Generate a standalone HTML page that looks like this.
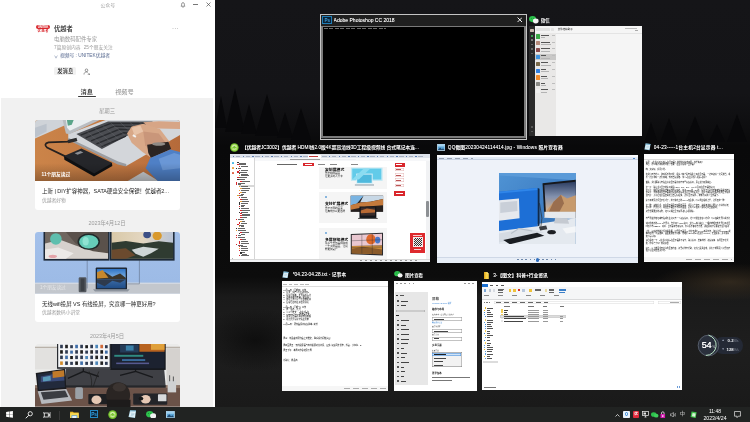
<!DOCTYPE html>
<html lang="zh-CN">
<head>
<meta charset="utf-8">
<title>任务视图</title>
<style>
*{box-sizing:border-box;margin:0;padding:0}
html,body{width:750px;height:422px;overflow:hidden;background:#0b0b0b}
body{position:relative;font-family:"Liberation Sans","Noto Sans CJK SC",sans-serif;color:#fff;-webkit-font-smoothing:antialiased}
.abs{position:absolute}
#tv,#panel,#taskbar{will-change:transform}
#wall{position:absolute;left:215px;top:0;width:535px;height:407px;overflow:hidden;
 background:
  radial-gradient(ellipse 70px 40px at 40px 340px,rgba(8,8,8,.7),rgba(8,8,8,0) 80%),
  radial-gradient(ellipse 90px 22px at 515px 282px,rgba(70,56,38,.6),rgba(0,0,0,0) 85%),
  linear-gradient(180deg,#151518 0%,#141417 23%,#0e0e10 31%,#09090a 36%,#0b0b0b 60%,#0c0c0c 68%,#1a1a1a 73%,#1e1e1e 85%,#1a1a1a 100%)}
/* ---------- left panel ---------- */
#panel{position:absolute;left:0;top:0;width:215px;height:406.5px;background:#fff;overflow:hidden;color:#222}
#panel .feed{position:absolute;left:1px;top:97.5px;width:211.6px;height:310px;background:#f1f1f1}
.t{position:absolute;white-space:nowrap;line-height:1}
.card{position:absolute;left:35px;width:145px;background:#fff;border-radius:3px;overflow:hidden}
.card svg{display:block}
.date{position:absolute;left:1px;width:212px;text-align:center;font-size:5.4px;color:#9a9a9a;line-height:1}
/* ---------- task view ---------- */
.wt{position:absolute;white-space:nowrap;font-size:4.75px;line-height:1.15;color:#fff;overflow:hidden;font-weight:500;text-shadow:0 0 .4px rgba(255,255,255,.6)}
.thumb{position:absolute;overflow:hidden;background:#fff}
.bx{position:absolute;background:var(--f,#fff);box-shadow:inset 0 0 0 .4px var(--b,#888)}
/* ---------- taskbar ---------- */
#taskbar{position:absolute;left:0;top:406.5px;width:750px;height:15.5px;background:#212322}
</style>
</head>
<body>
<div id="wall"><svg width="535" height="407" viewBox="0 0 535 407" style="position:absolute;left:0;top:0"><g fill="#08080a"><polygon points="0,128 6,96 12,128"/><polygon points="10,132 20,88 30,132"/><polygon points="26,134 34,104 42,134"/><polygon points="40,136 52,94 64,136"/><polygon points="62,138 70,112 78,138"/><polygon points="76,140 86,108 96,140"/><polygon points="430,140 436,122 442,140"/><polygon points="446,140 454,118 462,140"/><polygon points="470,142 480,116 490,142"/><polygon points="494,142 502,124 510,142"/><polygon points="512,142 522,114 532,142"/></g></svg></div>

<!-- LEFT PANEL -->
<div id="panel">
  <div class="feed"></div>
  <!-- title bar -->
  <div class="t" style="left:100.5px;top:4.4px;font-size:4.9px;color:#9b9b9b">公众号</div>
  <svg class="abs" style="left:179.5px;top:1.6px" width="6" height="6.4" viewBox="0 0 12 13"><path d="M6 1.2c-1.7 0-2.8 1.3-2.8 3v2.2L2 8.6h8L8.8 6.400V4.200c0-1.700-1.100-3-2.800-3z" fill="none" stroke="#555" stroke-width="1.200"/><path d="M6 9v3" stroke="#555" stroke-width="1.200"/></svg>
  <div class="abs" style="left:193.300px;top:4.400px;width:4.400px;height:.7px;background:#777"></div>
  <svg class="abs" style="left:206px;top:2.200px" width="5" height="5" viewBox="0 0 10 10"><path d="M1 1l8 8M9 1l-8 8" stroke="#444" stroke-width="1.300"/></svg>
  <!-- account -->
  <div class="abs" style="left:36px;top:24.600px;width:14px;height:4.400px;border-radius:2.200px;background:#d9262c;color:#fff;font-size:3px;line-height:4.400px;text-align:center;font-weight:bold;letter-spacing:-.1px">UNITEK</div>
  <div class="t" style="left:37.500px;top:29.600px;font-size:3.200px;color:#d9262c;font-weight:bold;letter-spacing:.7px">优越者</div>
  <div class="t" style="left:54px;top:26.100px;font-size:6.300px;color:#1a1a1a;font-weight:500">优越者</div>
  <div class="t" style="left:172px;top:25.300px;font-size:6px;color:#555;letter-spacing:.3px">···</div>
  <div class="t" style="left:54px;top:37.300px;font-size:5.400px;color:#9a9a9a">电脑数码配件专家</div>
  <div class="t" style="left:54px;top:46.100px;font-size:4.750px;color:#9a9a9a">7篇原创内容<span style="display:inline-block;width:3.300px"></span>25个朋友关注</div>
  <svg class="abs" style="left:53.800px;top:54.600px" width="4" height="4" viewBox="0 0 10 10"><path d="M1 2c1.500 0 2.500 1 4 6 1.500-5 2.500-6 4-6" fill="none" stroke="#7a8aa8" stroke-width="1.300"/></svg>
  <div class="t" style="left:60px;top:54.300px;font-size:4.750px;color:#56688f">视频号 : UNITEK优越者</div>
  <div class="abs" style="left:54.300px;top:67.400px;width:22px;height:8px;border-radius:1.500px;background:#f1f1f1"></div>
  <div class="t" style="left:57.300px;top:68.900px;font-size:5.300px;color:#222;font-weight:500">发消息</div>
  <svg class="abs" style="left:82.500px;top:67.800px" width="7.500" height="7.500" viewBox="0 0 15 15"><circle cx="7" cy="4.500" r="2.600" fill="none" stroke="#555" stroke-width="1.200"/><path d="M2 13c0-3.500 2.200-5 5-5 1.200 0 2.200.3 3 .8M9.500 12.500h4M11.500 10.500l2 2-2 2" fill="none" stroke="#555" stroke-width="1.200"/></svg>
  <!-- tabs -->
  <div class="t" style="left:80.600px;top:88.500px;font-size:6.200px;color:#222;font-weight:500">消息</div>
  <div class="abs" style="left:77.600px;top:96.300px;width:18.700px;height:1.200px;background:#3a3a3a;border-radius:.6px"></div>
  <div class="t" style="left:115.200px;top:88.500px;font-size:6.200px;color:#8c8c8c">视频号</div>
  <!-- feed -->
  <div class="date" style="top:109px">星期三</div>
  <div class="card" id="c1" style="top:119.500px;height:90px">
<svg width="145" height="61.500" viewBox="0 0 750 318" preserveAspectRatio="none">
<defs><linearGradient id="mat" x1="0" x2="1"><stop offset="0" stop-color="#cb8449"/><stop offset=".6" stop-color="#c27842"/><stop offset="1" stop-color="#b56a3a"/></linearGradient>
<linearGradient id="shade" x1="0" y1="0" x2="0" y2="1"><stop offset=".7" stop-color="#000" stop-opacity="0"/><stop offset="1" stop-color="#000" stop-opacity=".28"/></linearGradient></defs>
<rect width="750" height="318" fill="url(#mat)"/>
<polygon points="0,0 150,0 152,28 0,96" fill="#cfd3d8"/>
<polygon points="0,40 60,20 60,60 0,90" fill="#bcc3cc"/>
<polygon points="470,321 560,268 650,321" fill="#cdd0d3"/>
<!-- laptop base -->
<polygon points="172,72 365,0 750,0 750,78 472,238 428,226 172,100" fill="#d3d6da"/>
<polygon points="172,92 430,215 472,228 472,240 428,230 172,104" fill="#9b9ea3"/>
<!-- lid -->
<polygon points="143,0 335,0 178,74 160,70" fill="#b9bdc2"/>
<polygon points="160,0 300,0 180,55 166,40" fill="#e9eef0"/>
<polygon points="165,0 200,0 190,25 170,30" fill="#5aa58a"/>
<!-- keyboard -->
<polygon points="214,72 378,8 610,8 478,82 346,150" fill="#4b4d52"/>
<g stroke="#2a2c30" stroke-width="7" fill="none"><path d="M236,78L392,18L590,18"/><path d="M262,92L412,32L560,34"/><path d="M290,108L436,48L530,52"/><path d="M318,124L458,66L500,68"/><path d="M344,138L470,84"/></g>
<g stroke="#6a6c72" stroke-width="2" fill="none"><path d="M270,60L360,140M310,44L396,118M350,28L432,98M390,14L466,80M440,12L500,66M490,12L536,50M540,12L570,34"/></g>
<!-- cable -->
<path d="M205,104 L175,112 L70,116 Q42,124 62,142 L165,192" fill="none" stroke="#26211f" stroke-width="9" stroke-linecap="round"/>
<rect x="170" y="98" width="48" height="18" fill="#2a2a2c" transform="rotate(-14 190 108)"/>
<!-- hdd -->
<polygon points="150,188 152,205 305,292 400,238 398,222" fill="#101113"/>
<polygon points="150,186 240,148 400,222 306,276" fill="#25262a"/>
<polygon points="205,172 235,160 250,168 220,180" fill="#8b8e93"/>
<!-- hands -->
<polygon points="560,12 640,6 750,10 750,46 640,44 585,36" fill="#d7a586"/>
<polygon points="476,70 500,34 560,20 646,46 696,112 604,198 556,166 500,118" fill="#d8a888"/>
<polygon points="560,60 640,70 676,118 610,170 570,130" fill="#c9967a"/>
<polygon points="500,40 545,28 560,60 515,80" fill="#e8c3a8"/>
<rect x="505" y="78" width="18" height="10" fill="#f2f2f2" transform="rotate(30 514 83)"/>
<!-- watch -->
<polygon points="580,128 690,112 704,150 600,196 586,170" fill="#2b2422"/>
<ellipse cx="640" cy="124" rx="34" ry="9" fill="#8f8a85"/>
<!-- sleeve -->
<polygon points="596,196 700,152 750,166 750,321 640,321 572,250" fill="#4f80c6"/>
<polygon points="640,200 720,170 750,180 750,250 660,260" fill="#6a97d6"/>
<rect width="750" height="318" fill="url(#shade)"/>
<text x="34" y="292" font-size="24.500" fill="#fff" font-weight="bold" style="font-family:'Liberation Sans','Noto Sans CJK SC',sans-serif">11个朋友读过</text>
</svg>
<div class="t" style="left:7px;top:69.400px;font-size:5.450px;color:#1d1d1d">上新 | DIY扩容神器，SATA硬盘安全保镖！优越者2...</div>
<div class="t" style="left:7px;top:79px;font-size:4.750px;color:#9a9a9a">优越者好物</div>
</div>
  <div class="date" style="top:221.100px">2023年4月12日</div>
  <div class="card" id="c2" style="top:232px;height:90px">
<svg width="145" height="61.500" viewBox="0 0 750 318" preserveAspectRatio="none">
<defs><linearGradient id="bl" x1="0" y1="0" x2="0" y2="1"><stop offset="0" stop-color="#a3c0ea"/><stop offset=".8" stop-color="#9dbbe6"/><stop offset="1" stop-color="#b5c6de"/></linearGradient>
<linearGradient id="sky2" x1="0" y1="0" x2="0" y2="1"><stop offset="0" stop-color="#2f74c6"/><stop offset=".45" stop-color="#7db0e2"/><stop offset=".5" stop-color="#3f6fa8"/><stop offset="1" stop-color="#1f4c86"/></linearGradient>
<linearGradient id="land" x1="0" y1="0" x2="1" y2="0"><stop offset="0" stop-color="#d9c9a8"/><stop offset=".5" stop-color="#e3d6c0"/><stop offset="1" stop-color="#b9c4d6"/></linearGradient></defs>
<rect width="750" height="318" fill="url(#bl)"/>
<rect y="266" width="750" height="52" fill="#c3c7cd"/>
<rect y="262" width="750" height="6" fill="#d9dde3"/>
<!-- cables -->
<path d="M270,146V292M540,146V268H478" fill="none" stroke="#5e6e86" stroke-width="3"/>
<!-- left monitor: cat -->
<rect x="44" y="-4" width="342" height="152" fill="#1c2837"/>
<rect x="52" y="0" width="326" height="138" fill="#6f665f"/>
<polygon points="160,0 378,0 378,110 300,100 210,60" fill="#5a514b"/>
<polygon points="52,60 130,40 210,70 300,100 378,110 378,138 52,138" fill="#d6d1cd"/>
<polygon points="52,90 120,80 200,110 160,138 52,138" fill="#ece9e7"/>
<ellipse cx="278" cy="50" rx="58" ry="42" fill="#1f2a2a"/>
<ellipse cx="278" cy="50" rx="50" ry="35" fill="#66cdb9"/>
<ellipse cx="262" cy="48" rx="16" ry="22" fill="#8fe3d2"/>
<ellipse cx="108" cy="36" rx="30" ry="30" fill="#5fbfae"/>
<ellipse cx="92" cy="126" rx="22" ry="9" fill="#e4a3a8"/>
<!-- right monitor: landscape -->
<rect x="388" y="-4" width="334" height="152" fill="#1c2837"/>
<rect x="396" y="0" width="318" height="138" fill="url(#land)"/>
<polygon points="396,56 470,46 560,60 640,48 714,56 714,138 396,138" fill="#2f3b31"/>
<polygon points="500,92 560,76 640,86 600,110 560,128 520,112" fill="#cfd6d6"/>
<polygon points="396,92 470,84 520,120 470,138 396,138" fill="#6b4a2e"/>
<ellipse cx="580" cy="14" rx="20" ry="18" fill="#3c4f86"/>
<ellipse cx="632" cy="20" rx="24" ry="22" fill="#d9992c"/>
<!-- hub -->
<rect x="226" y="234" width="40" height="78" rx="6" fill="#555a61"/>
<rect x="236" y="240" width="20" height="66" fill="#3c4046"/>
<!-- laptop -->
<rect x="314" y="184" width="162" height="114" rx="5" fill="#1e2530"/>
<rect x="321" y="191" width="148" height="100" fill="url(#sky2)"/>
<polygon points="321,240 360,206 400,232 440,214 469,236 469,244 321,244" fill="#3a352c"/>
<polygon points="321,208 350,196 380,236 321,240" fill="#c7882c"/>
<polygon points="321,246 469,246 440,262 400,252 360,280 321,262" fill="#2e3a4c"/>
<polygon points="300,296 490,296 480,308 310,308" fill="#8d949e"/>
<text x="26" y="294" font-size="24" fill="#fff" fill-opacity=".55" style="font-family:'Liberation Sans','Noto Sans CJK SC',sans-serif">1个朋友读过</text>
</svg>
<div class="t" style="left:7px;top:70.200px;font-size:5.450px;color:#1d1d1d">无线wifi投屏 VS 有线投屏，究竟哪一种更好用?</div>
<div class="t" style="left:7px;top:79px;font-size:4.750px;color:#9a9a9a">优越者数码小讲堂</div>
</div>
  <div class="date" style="top:334px">2023年4月5日</div>
  <div class="card" id="c3" style="top:344px;height:70px">
<svg width="145" height="62.500" viewBox="0 8 750 323" preserveAspectRatio="none">
<rect y="0" width="750" height="331" fill="#ebebea"/>
<rect y="22" width="750" height="7" fill="#b9b2aa"/>
<rect y="29" width="750" height="110" fill="#e2e1df"/>
<rect x="680" y="30" width="70" height="200" fill="#d5d2cf"/>
<!-- desk -->
<rect y="222" width="750" height="110" fill="#6b5248"/>
<rect y="222" width="750" height="14" fill="#8a7264"/>
<!-- riser -->
<polygon points="160,136 668,136 676,226 150,226" fill="#3f4045"/>
<rect x="150" y="222" width="526" height="12" fill="#25262a"/>
<!-- stands -->
<path d="M250,132V150L170,186M250,150L330,176M520,132V150L440,170M520,150L610,180" stroke="#18191c" stroke-width="7" fill="none"/>
<path d="M280,150Q300,200 290,232M330,150Q310,200 300,232" stroke="#222" stroke-width="4" fill="none"/>
<!-- left monitor -->
<rect x="114" y="2" width="278" height="134" fill="#22252b"/>
<rect x="120" y="6" width="266" height="122" fill="#f4f5f7"/>
<g fill="#2f3b52"><rect x="130" y="12" width="14" height="18"/><rect x="156" y="12" width="14" height="18" fill="#222"/><rect x="182" y="14" width="14" height="16"/><rect x="208" y="12" width="14" height="18" fill="#3f6ea8"/><rect x="234" y="12" width="14" height="18"/><rect x="260" y="14" width="14" height="16" fill="#1b1b1b"/><rect x="286" y="12" width="14" height="18"/><rect x="312" y="12" width="14" height="18" fill="#4c86b8"/><rect x="338" y="12" width="14" height="18" fill="#d06a3a"/><rect x="362" y="14" width="14" height="16"/>
<rect x="130" y="40" width="14" height="18" fill="#1b1b1b"/><rect x="156" y="40" width="14" height="18"/><rect x="182" y="42" width="14" height="16" fill="#3f6ea8"/><rect x="208" y="40" width="14" height="18"/><rect x="234" y="40" width="14" height="18" fill="#222"/><rect x="260" y="42" width="14" height="16"/><rect x="286" y="40" width="14" height="18" fill="#2a2a2a"/><rect x="312" y="40" width="14" height="18"/><rect x="338" y="40" width="14" height="18" fill="#1b1b1b"/><rect x="362" y="42" width="14" height="16" fill="#3f6ea8"/>
<rect x="130" y="68" width="14" height="18"/><rect x="156" y="68" width="14" height="18" fill="#3f6ea8"/><rect x="182" y="70" width="14" height="16" fill="#1b1b1b"/><rect x="208" y="68" width="14" height="18"/><rect x="234" y="68" width="14" height="18"/><rect x="260" y="70" width="14" height="16" fill="#4c86b8"/><rect x="286" y="68" width="14" height="18"/><rect x="312" y="68" width="14" height="18" fill="#222"/><rect x="338" y="68" width="14" height="18"/><rect x="362" y="70" width="14" height="16" fill="#1b1b1b"/>
<rect x="130" y="98" width="14" height="18" fill="#d08a2a"/><rect x="156" y="98" width="14" height="18"/><rect x="182" y="100" width="14" height="16"/><rect x="208" y="98" width="14" height="18" fill="#1b1b1b"/><rect x="234" y="98" width="14" height="18" fill="#3f6ea8"/><rect x="260" y="100" width="14" height="16"/><rect x="286" y="98" width="14" height="18"/><rect x="312" y="98" width="14" height="18" fill="#4c86b8"/><rect x="338" y="98" width="14" height="18" fill="#222"/><rect x="362" y="100" width="14" height="16"/></g>
<!-- right monitor -->
<rect x="390" y="2" width="286" height="140" fill="#15171c"/>
<rect x="396" y="8" width="274" height="126" fill="#1c2230"/>
<rect x="540" y="8" width="130" height="40" fill="#b8631f"/>
<rect x="600" y="8" width="70" height="30" fill="#e0a03a"/>
<rect x="440" y="12" width="96" height="40" fill="#243c58"/>
<rect x="470" y="16" width="40" height="26" fill="#3a80a8"/>
<rect x="410" y="64" width="150" height="10" fill="#2f8a80"/>
<rect x="450" y="86" width="120" height="10" fill="#3a6a9a"/>
<rect x="420" y="104" width="170" height="8" fill="#565a90"/>
<!-- laptop -->
<polygon points="4,158 156,136 162,240 14,252" fill="#1b1c20"/>
<polygon points="12,164 150,144 155,232 20,244" fill="#222a3c"/>
<polygon points="30,176 90,164 150,158 152,196 30,206" fill="#3a4a78"/>
<polygon points="90,150 150,144 152,176 92,184" fill="#c07a2a"/>
<polygon points="40,180 80,172 82,196 42,202" fill="#5a9ab8"/>
<polygon points="14,252 162,240 192,300 34,318" fill="#b7babf"/>
<polygon points="30,258 156,248 172,282 44,296" fill="#3b3d42"/>
<!-- cup -->
<rect x="208" y="232" width="40" height="60" rx="8" fill="#9aa0a6"/>
<!-- pens -->
<rect x="686" y="196" width="44" height="62" fill="#cfd1d3"/>
<path d="M696,170V200M716,176V200" stroke="#666" stroke-width="6"/>
<!-- keyboard + pad -->
<rect x="276" y="266" width="100" height="54" rx="4" fill="#1e1f22"/>
<rect x="508" y="264" width="176" height="58" rx="4" fill="#232428"/>
<rect x="636" y="268" width="44" height="36" rx="3" fill="#d8dadc"/>
<!-- person -->
<ellipse cx="430" cy="272" rx="62" ry="66" fill="#2a2523"/>
<ellipse cx="436" cy="232" rx="34" ry="22" fill="#3b3431"/>
<rect x="372" y="296" width="122" height="40" fill="#1d1b1b"/>
<ellipse cx="318" cy="296" rx="26" ry="22" fill="#e6c8b4"/>
<ellipse cx="572" cy="294" rx="26" ry="22" fill="#e6c8b4"/>
<ellipse cx="548" cy="290" rx="12" ry="10" fill="#1a1a1a"/>
</svg>
</div>
</div>

<!-- TASK VIEW WINDOWS -->
<div id="tv">
  <!-- Photoshop (selected) -->
  <div class="abs" style="left:320px;top:13.500px;width:207px;height:126px;background:#1f1f1f;border:1px solid #c4c4c4"></div>
  <div class="abs" style="left:322.400px;top:15.600px;width:9.600px;height:8.400px;background:#0b2236;border:.7px solid #1f7db6;color:#3a9bd8;font-size:4.600px;line-height:7px;text-align:center;font-weight:bold;letter-spacing:-.2px">Ps</div>
  <div class="wt" style="left:333.600px;top:18.200px;font-size:5.020px">Adobe Photoshop CC 2018</div>
  <svg class="abs" style="left:516.800px;top:17.400px" width="5.600" height="5.600" viewBox="0 0 10 10"><path d="M1 1l8 8M9 1l-8 8" stroke="#fff" stroke-width="1.700"/></svg>
  <div class="thumb" style="left:321px;top:25.800px;width:205px;height:112.700px;background:#7a7a7a">
    <div class="abs" style="left:1.900px;top:1.600px;width:201.200px;height:108.600px;background:#000"></div>
    <div class="abs" style="left:3px;top:2.400px;width:62px;height:.8px;background:repeating-linear-gradient(90deg,#6a6a6a 0 4px,#000 4px 5.500px)"></div>
  </div>

  <!-- WeChat -->
  <svg class="abs" style="left:529px;top:16.300px" width="9.600" height="7.800" viewBox="0 0 21 17"><ellipse cx="7.800" cy="6.800" rx="7.800" ry="6.600" fill="#2dc24d"/><ellipse cx="14.800" cy="11" rx="6.200" ry="5.300" fill="#f4f4f4"/><circle cx="5.200" cy="5" r="1" fill="#0c6e24"/><circle cx="10.200" cy="5" r="1" fill="#0c6e24"/></svg>
  <div class="wt" style="left:540.800px;top:18.400px;font-size:4.450px">微信</div>
  <div class="thumb" style="left:529.300px;top:26.300px;width:112.400px;height:109.500px;background:#f5f5f5">
    <div class="abs" style="left:0;top:0;width:5.600px;height:100%;background:#2b2b2b"></div>
    <div class="abs" style="left:1.200px;top:2.600px;width:3.200px;height:3.200px;background:#c9b9b0;border-radius:.4px"></div>
    <div class="abs" style="left:1.900px;top:8.600px;width:1.800px;height:1.800px;background:#3bc45a;border-radius:50%"></div>
    <div class="abs" style="left:1.900px;top:13.200px;width:1.800px;height:1.600px;background:#777"></div>
    <div class="abs" style="left:1.900px;top:17.600px;width:1.800px;height:1.600px;background:#666"></div>
    <div class="abs" style="left:1.900px;top:22px;width:1.800px;height:1.600px;background:#666"></div>
    <div class="abs" style="left:1.900px;top:26.400px;width:1.800px;height:1.600px;background:#5d5d5d"></div>
    <div class="abs" style="left:1.900px;top:100px;width:1.800px;height:1.400px;background:#555"></div>
    <div class="abs" style="left:1.900px;top:104.500px;width:1.800px;height:1.400px;background:#555"></div>
    <div class="abs" style="left:5.600px;top:0;width:20.800px;height:100%;background:#e9e8e7"></div>
    <div class="abs" style="left:5.600px;top:0;width:20.800px;height:6.800px;background:#f3f3f3"></div>
    <div class="abs" style="left:7px;top:2.200px;width:13.500px;height:2.800px;background:#e2e2e2;border-radius:.6px"></div>
    <div class="abs" style="left:22.200px;top:2.200px;width:2.800px;height:2.800px;background:#e2e2e2;border-radius:.6px"></div>
    <div class="abs" style="left:5.600px;top:27.300px;width:20.800px;height:6.800px;background:#c9c8c7"></div>
    <div class="abs" style="left:6.900px;top:8.10px;width:4.200px;height:4.200px;background:#3aa845;border-radius:.5px"></div><div class="abs" style="left:12.200px;top:8.40px;width:8px;height:.9px;background:#555"></div><div class="abs" style="left:12.200px;top:11.00px;width:4px;height:.7px;background:#b3b3b3"></div><div class="abs" style="left:23px;top:8.50px;width:2.400px;height:.6px;background:#bdbdbd"></div><div class="abs" style="left:6.900px;top:14.93px;width:4.200px;height:4.200px;background:#b58a7a;border-radius:.5px"></div><div class="abs" style="left:12.200px;top:15.23px;width:9px;height:.9px;background:#555"></div><div class="abs" style="left:12.200px;top:17.83px;width:10px;height:.7px;background:#b3b3b3"></div><div class="abs" style="left:23px;top:15.33px;width:2.400px;height:.6px;background:#bdbdbd"></div><div class="abs" style="left:6.900px;top:21.76px;width:4.200px;height:4.200px;background:#8a4a4a;border-radius:.5px"></div><div class="abs" style="left:12.200px;top:22.06px;width:9px;height:.9px;background:#555"></div><div class="abs" style="left:12.200px;top:24.66px;width:9px;height:.7px;background:#b3b3b3"></div><div class="abs" style="left:23px;top:22.16px;width:2.400px;height:.6px;background:#bdbdbd"></div><div class="abs" style="left:6.900px;top:28.59px;width:4.200px;height:4.200px;background:#3f94e0;border-radius:.5px"></div><div class="abs" style="left:12.200px;top:28.89px;width:5px;height:.9px;background:#555"></div><div class="abs" style="left:12.200px;top:31.49px;width:9px;height:.7px;background:#b3b3b3"></div><div class="abs" style="left:23px;top:28.99px;width:2.400px;height:.6px;background:#bdbdbd"></div><div class="abs" style="left:6.900px;top:35.42px;width:4.200px;height:4.200px;background:#7a6a4a;border-radius:.5px"></div><div class="abs" style="left:12.200px;top:35.72px;width:7px;height:.9px;background:#555"></div><div class="abs" style="left:12.200px;top:38.32px;width:10px;height:.7px;background:#b3b3b3"></div><div class="abs" style="left:23px;top:35.82px;width:2.400px;height:.6px;background:#bdbdbd"></div><div class="abs" style="left:6.900px;top:42.25px;width:4.200px;height:4.200px;background:#2f7fe0;border-radius:.5px"></div><div class="abs" style="left:12.200px;top:42.55px;width:5px;height:.9px;background:#555"></div><div class="abs" style="left:12.200px;top:45.15px;width:8px;height:.7px;background:#b3b3b3"></div><div class="abs" style="left:23px;top:42.65px;width:2.400px;height:.6px;background:#bdbdbd"></div><div class="abs" style="left:6.900px;top:49.08px;width:4.200px;height:4.200px;background:#f08a2a;border-radius:.5px"></div><div class="abs" style="left:12.200px;top:49.38px;width:6px;height:.9px;background:#555"></div><div class="abs" style="left:12.200px;top:51.98px;width:7px;height:.7px;background:#b3b3b3"></div><div class="abs" style="left:23px;top:49.48px;width:2.400px;height:.6px;background:#bdbdbd"></div><div class="abs" style="left:6.900px;top:55.91px;width:4.200px;height:4.200px;background:#8a8a86;border-radius:.5px"></div><div class="abs" style="left:12.200px;top:56.21px;width:4px;height:.9px;background:#555"></div><div class="abs" style="left:12.200px;top:58.81px;width:5px;height:.7px;background:#b3b3b3"></div><div class="abs" style="left:23px;top:56.31px;width:2.400px;height:.6px;background:#bdbdbd"></div><div class="abs" style="left:6.900px;top:62.74px;width:4.200px;height:4.200px;background:#efefef;border-radius:.5px"></div><div class="abs" style="left:12.200px;top:63.04px;width:7px;height:.9px;background:#555"></div><div class="abs" style="left:12.200px;top:65.64px;width:6px;height:.7px;background:#b3b3b3"></div><div class="abs" style="left:23px;top:63.14px;width:2.400px;height:.6px;background:#bdbdbd"></div>
    <div class="t" style="left:28.500px;top:2.600px;font-size:2.500px;color:#222">文件传输助手</div>
    <div class="abs" style="left:26.400px;top:6.800px;width:86px;height:.3px;background:#e4e4e4"></div>
    <div class="abs" style="left:96px;top:1.500px;width:12px;height:.5px;background:#bbb"></div>
    <div class="abs" style="left:106px;top:3.800px;width:2.500px;height:.5px;background:#aaa"></div>
  </div>

  <!-- 360 browser -->
  <svg class="abs" style="left:230.100px;top:143.200px" width="8.800" height="8.800" viewBox="0 0 20 20"><circle cx="10" cy="10" r="9.700" fill="#6fbf2c"/><circle cx="10" cy="10" r="7" fill="#b9e46e"/><circle cx="10" cy="10" r="4.800" fill="#79c431"/><path d="M6 9.500a4 4 0 018 0M6.500 12c2 2.500 5 2.500 7 0" stroke="#fff" stroke-width="1.500" fill="none"/></svg>
  <div class="wt" style="left:241.900px;top:145.200px;width:178px">【优越者JC3002】优越者 HDMI线2.0版4K超高清线3D工程级视频线 台式笔记本连...</div>
  <div class="thumb" style="left:230.400px;top:154.400px;width:200px;height:108px;background:#fff">
    <div class="abs" style="left:0;top:0;width:200px;height:3.700px;background:#dde2ea"></div>
    <div class="abs" style="left:3px;top:1.200px;width:190px;height:1.400px;background:repeating-linear-gradient(90deg,#5d7fb4 0 1.400px,#dde2ea 1.400px 3px,#a9b2c2 3px 7.500px,#dde2ea 7.500px 9.600px)"></div>
    <div class="abs" style="left:78px;top:.5px;width:13px;height:3.200px;background:#fff"></div>
    <div class="abs" style="left:79px;top:1.600px;width:9px;height:.7px;background:#c03a3a"></div>
    <div class="abs" style="left:0;top:3.700px;width:200px;height:3px;background:#f6f7f9"></div>
    <div class="abs" style="left:56px;top:4.500px;width:70px;height:1.600px;background:#eceef2;border-radius:.8px"></div>
    <div class="abs" style="left:60px;top:5px;width:30px;height:.6px;background:#999"></div>
    <!-- left tree -->
    <div class="abs" style="left:0;top:3.700px;width:25px;height:104px;background:#fff;border-right:.4px solid #d6d6d6"></div>
    <div class="abs" style="left:1.200px;top:7.500px;width:2px;height:2px;background:#3bb4e8;border-radius:.4px"></div>
    <div class="abs" style="left:1.200px;top:12.500px;width:2px;height:2px;background:#f0a03c;border-radius:.4px"></div>
    <div class="abs" style="left:1.200px;top:17.500px;width:2px;height:2px;background:#e05a3a;border-radius:.4px"></div>
    <div class="abs" style="left:9px;top:30.900px;width:15px;height:1.700px;background:#d8d8d8"></div>
    <div class="abs" style="left:7px;top:8.00px;width:1.300px;height:1.100px;background:#333"></div><div class="abs" style="left:9px;top:8.25px;width:7px;height:.6px;background:#666"></div><div class="abs" style="left:7px;top:9.82px;width:1.300px;height:1.100px;background:#d8262c"></div><div class="abs" style="left:9px;top:10.07px;width:7px;height:.6px;background:#666"></div><div class="abs" style="left:8.5px;top:11.64px;width:1.300px;height:1.100px;background:#d8262c"></div><div class="abs" style="left:10.5px;top:11.89px;width:7px;height:.6px;background:#666"></div><div class="abs" style="left:5.5px;top:13.46px;width:1.300px;height:1.100px;background:#333"></div><div class="abs" style="left:7.5px;top:13.71px;width:3px;height:.6px;background:#666"></div><div class="abs" style="left:8.5px;top:15.28px;width:1.300px;height:1.100px;background:#d8262c"></div><div class="abs" style="left:10.5px;top:15.53px;width:7px;height:.6px;background:#666"></div><div class="abs" style="left:7px;top:17.10px;width:1.300px;height:1.100px;background:#d8262c"></div><div class="abs" style="left:9px;top:17.35px;width:8px;height:.6px;background:#666"></div><div class="abs" style="left:8.5px;top:18.92px;width:1.300px;height:1.100px;background:#333"></div><div class="abs" style="left:10.5px;top:19.17px;width:7px;height:.6px;background:#666"></div><div class="abs" style="left:8.5px;top:20.74px;width:1.300px;height:1.100px;background:#e9a03a"></div><div class="abs" style="left:10.5px;top:20.99px;width:8px;height:.6px;background:#666"></div><div class="abs" style="left:7px;top:22.56px;width:1.300px;height:1.100px;background:#d8262c"></div><div class="abs" style="left:9px;top:22.81px;width:8px;height:.6px;background:#666"></div><div class="abs" style="left:7px;top:24.38px;width:1.300px;height:1.100px;background:#333"></div><div class="abs" style="left:9px;top:24.63px;width:6px;height:.6px;background:#666"></div><div class="abs" style="left:10px;top:26.20px;width:1.300px;height:1.100px;background:#d8262c"></div><div class="abs" style="left:12px;top:26.45px;width:8px;height:.6px;background:#666"></div><div class="abs" style="left:5.5px;top:28.02px;width:1.300px;height:1.100px;background:#d8262c"></div><div class="abs" style="left:7.5px;top:28.27px;width:7px;height:.6px;background:#666"></div><div class="abs" style="left:5.5px;top:29.84px;width:1.300px;height:1.100px;background:#d8262c"></div><div class="abs" style="left:7.5px;top:30.09px;width:3px;height:.6px;background:#666"></div><div class="abs" style="left:8.5px;top:31.66px;width:1.300px;height:1.100px;background:#e9a03a"></div><div class="abs" style="left:10.5px;top:31.91px;width:7px;height:.6px;background:#666"></div><div class="abs" style="left:10px;top:33.48px;width:1.300px;height:1.100px;background:#e9a03a"></div><div class="abs" style="left:12px;top:33.73px;width:8px;height:.6px;background:#666"></div><div class="abs" style="left:8.5px;top:35.30px;width:1.300px;height:1.100px;background:#e9a03a"></div><div class="abs" style="left:10.5px;top:35.55px;width:8px;height:.6px;background:#666"></div><div class="abs" style="left:10px;top:37.12px;width:1.300px;height:1.100px;background:#e9a03a"></div><div class="abs" style="left:12px;top:37.37px;width:4px;height:.6px;background:#666"></div><div class="abs" style="left:8.5px;top:38.94px;width:1.300px;height:1.100px;background:#d8262c"></div><div class="abs" style="left:10.5px;top:39.19px;width:3px;height:.6px;background:#666"></div><div class="abs" style="left:7px;top:40.76px;width:1.300px;height:1.100px;background:#e9a03a"></div><div class="abs" style="left:9px;top:41.01px;width:4px;height:.6px;background:#666"></div><div class="abs" style="left:8.5px;top:42.58px;width:1.300px;height:1.100px;background:#d8262c"></div><div class="abs" style="left:10.5px;top:42.83px;width:6px;height:.6px;background:#666"></div><div class="abs" style="left:10px;top:44.40px;width:1.300px;height:1.100px;background:#d8262c"></div><div class="abs" style="left:12px;top:44.65px;width:6px;height:.6px;background:#666"></div><div class="abs" style="left:10px;top:46.22px;width:1.300px;height:1.100px;background:#e9a03a"></div><div class="abs" style="left:12px;top:46.47px;width:7px;height:.6px;background:#666"></div><div class="abs" style="left:8.5px;top:48.04px;width:1.300px;height:1.100px;background:#333"></div><div class="abs" style="left:10.5px;top:48.29px;width:7px;height:.6px;background:#666"></div><div class="abs" style="left:8.5px;top:49.86px;width:1.300px;height:1.100px;background:#333"></div><div class="abs" style="left:10.5px;top:50.11px;width:4px;height:.6px;background:#666"></div><div class="abs" style="left:8.5px;top:51.68px;width:1.300px;height:1.100px;background:#d8262c"></div><div class="abs" style="left:10.5px;top:51.93px;width:3px;height:.6px;background:#666"></div><div class="abs" style="left:8.5px;top:53.50px;width:1.300px;height:1.100px;background:#333"></div><div class="abs" style="left:10.5px;top:53.75px;width:8px;height:.6px;background:#666"></div><div class="abs" style="left:10px;top:55.32px;width:1.300px;height:1.100px;background:#d8262c"></div><div class="abs" style="left:12px;top:55.57px;width:8px;height:.6px;background:#666"></div><div class="abs" style="left:8.5px;top:57.14px;width:1.300px;height:1.100px;background:#333"></div><div class="abs" style="left:10.5px;top:57.39px;width:7px;height:.6px;background:#666"></div><div class="abs" style="left:10px;top:58.96px;width:1.300px;height:1.100px;background:#d8262c"></div><div class="abs" style="left:12px;top:59.21px;width:8px;height:.6px;background:#666"></div><div class="abs" style="left:10px;top:60.78px;width:1.300px;height:1.100px;background:#d8262c"></div><div class="abs" style="left:12px;top:61.03px;width:8px;height:.6px;background:#666"></div><div class="abs" style="left:10px;top:62.60px;width:1.300px;height:1.100px;background:#d8262c"></div><div class="abs" style="left:12px;top:62.85px;width:5px;height:.6px;background:#666"></div><div class="abs" style="left:5.5px;top:64.42px;width:1.300px;height:1.100px;background:#d8262c"></div><div class="abs" style="left:7.5px;top:64.67px;width:6px;height:.6px;background:#666"></div><div class="abs" style="left:10px;top:66.24px;width:1.300px;height:1.100px;background:#e9a03a"></div><div class="abs" style="left:12px;top:66.49px;width:3px;height:.6px;background:#666"></div><div class="abs" style="left:8.5px;top:68.06px;width:1.300px;height:1.100px;background:#d8262c"></div><div class="abs" style="left:10.5px;top:68.31px;width:6px;height:.6px;background:#666"></div><div class="abs" style="left:7px;top:69.88px;width:1.300px;height:1.100px;background:#d8262c"></div><div class="abs" style="left:9px;top:70.13px;width:5px;height:.6px;background:#666"></div><div class="abs" style="left:8.5px;top:71.70px;width:1.300px;height:1.100px;background:#e9a03a"></div><div class="abs" style="left:10.5px;top:71.95px;width:3px;height:.6px;background:#666"></div><div class="abs" style="left:5.5px;top:73.52px;width:1.300px;height:1.100px;background:#333"></div><div class="abs" style="left:7.5px;top:73.77px;width:7px;height:.6px;background:#666"></div><div class="abs" style="left:5.5px;top:75.34px;width:1.300px;height:1.100px;background:#e9a03a"></div><div class="abs" style="left:7.5px;top:75.59px;width:8px;height:.6px;background:#666"></div><div class="abs" style="left:10px;top:77.16px;width:1.300px;height:1.100px;background:#d8262c"></div><div class="abs" style="left:12px;top:77.41px;width:7px;height:.6px;background:#666"></div><div class="abs" style="left:8.5px;top:78.98px;width:1.300px;height:1.100px;background:#333"></div><div class="abs" style="left:10.5px;top:79.23px;width:4px;height:.6px;background:#666"></div><div class="abs" style="left:5.5px;top:80.80px;width:1.300px;height:1.100px;background:#d8262c"></div><div class="abs" style="left:7.5px;top:81.05px;width:3px;height:.6px;background:#666"></div><div class="abs" style="left:5.5px;top:82.62px;width:1.300px;height:1.100px;background:#d8262c"></div><div class="abs" style="left:7.5px;top:82.87px;width:7px;height:.6px;background:#666"></div><div class="abs" style="left:10px;top:84.44px;width:1.300px;height:1.100px;background:#d8262c"></div><div class="abs" style="left:12px;top:84.69px;width:4px;height:.6px;background:#666"></div><div class="abs" style="left:8.5px;top:86.26px;width:1.300px;height:1.100px;background:#d8262c"></div><div class="abs" style="left:10.5px;top:86.51px;width:7px;height:.6px;background:#666"></div><div class="abs" style="left:8.5px;top:88.08px;width:1.300px;height:1.100px;background:#d8262c"></div><div class="abs" style="left:10.5px;top:88.33px;width:8px;height:.6px;background:#666"></div><div class="abs" style="left:5.5px;top:89.90px;width:1.300px;height:1.100px;background:#d8262c"></div><div class="abs" style="left:7.5px;top:90.15px;width:5px;height:.6px;background:#666"></div><div class="abs" style="left:8.5px;top:91.72px;width:1.300px;height:1.100px;background:#d8262c"></div><div class="abs" style="left:10.5px;top:91.97px;width:6px;height:.6px;background:#666"></div><div class="abs" style="left:8.5px;top:93.54px;width:1.300px;height:1.100px;background:#e9a03a"></div><div class="abs" style="left:10.5px;top:93.79px;width:7px;height:.6px;background:#666"></div><div class="abs" style="left:8.5px;top:95.36px;width:1.300px;height:1.100px;background:#d8262c"></div><div class="abs" style="left:10.5px;top:95.61px;width:7px;height:.6px;background:#666"></div><div class="abs" style="left:10px;top:97.18px;width:1.300px;height:1.100px;background:#333"></div><div class="abs" style="left:12px;top:97.43px;width:3px;height:.6px;background:#666"></div><div class="abs" style="left:10px;top:99.00px;width:1.300px;height:1.100px;background:#333"></div><div class="abs" style="left:12px;top:99.25px;width:5px;height:.6px;background:#666"></div><div class="abs" style="left:8.5px;top:100.82px;width:1.300px;height:1.100px;background:#d8262c"></div><div class="abs" style="left:10.5px;top:101.07px;width:8px;height:.6px;background:#666"></div>
    <div class="bx" style="left:1.500px;top:103.600px;width:1.600px;height:1.600px;;border-radius:50%;--f:#fff;--b:#888"></div>
    <div class="abs" style="left:5px;top:104.200px;width:14px;height:.6px;background:#999"></div>
    <!-- page nav -->
    <div class="abs" style="left:47px;top:9.500px;width:20px;height:.7px;background:#666"></div>
    <div class="abs" style="left:72.300px;top:8.300px;width:11.300px;height:3.600px;background:#d9262c"></div>
    <div class="abs" style="left:74.500px;top:9.800px;width:7px;height:.6px;background:#fff"></div>
    <div class="abs" style="left:88px;top:9.500px;width:7px;height:.7px;background:#888"></div>
    <div class="abs" style="left:100px;top:9.500px;width:7px;height:.7px;background:#888"></div>
    <div class="abs" style="left:121px;top:9.500px;width:7px;height:.7px;background:#888"></div>
    <!-- product blocks -->
    <div class="abs" style="left:89px;top:12.500px;width:67.500px;height:21.800px;background:#f5f5f5"></div>
    <div class="t" style="left:94.500px;top:13.4px;font-size:3.900px;color:#000;font-weight:bold">复制屏模式</div>
    <div class="t" style="left:94.500px;top:18.6px;font-size:2.550px;color:#222">显示相同画面</div>
    <div class="t" style="left:94.500px;top:21.9px;font-size:2.550px;color:#222">让更多的人分享</div>
    <svg class="abs" style="left:119.600px;top:12.800px" width="33.500" height="19.800" viewBox="0 0 100 60"><rect x="2" y="2" width="96" height="40" fill="#bfe8f4"/><rect x="6" y="5" width="88" height="33" fill="#62cbe9"/><rect x="18" y="20" width="50" height="32" fill="#d8f0f8"/><rect x="21" y="23" width="44" height="25" fill="#4fb9dd"/><polygon points="6,38 40,5 60,5 26,38" fill="#8bdcf1"/><rect x="14" y="53" width="58" height="3" fill="#8a9aa6"/></svg>
    <div class="abs" style="left:89px;top:38px;width:67.500px;height:30.500px;background:#f5f5f5"></div>
    <div class="abs" style="left:94.500px;top:41.500px;width:2.600px;height:2.600px;border:.5px solid #3b8ad0;border-radius:50%"></div>
    <div class="t" style="left:94.500px;top:48.1px;font-size:3.900px;color:#000;font-weight:bold">支持扩展模式</div>
    <div class="t" style="left:94.500px;top:53.3px;font-size:2.550px;color:#222">显示不同的画面</div>
    <div class="t" style="left:94.500px;top:56.8px;font-size:2.550px;color:#222">让高效办公更容易</div>
    <svg class="abs" style="left:119.600px;top:40.500px" width="33.800" height="25" viewBox="0 0 100 74"><rect x="2" y="2" width="96" height="48" fill="#26201f"/><polygon points="2,2 40,2 20,26 2,30" fill="#7ab4e2"/><polygon points="40,2 98,2 98,12 60,20 30,22" fill="#c8d8e6"/><polygon points="2,30 30,22 60,20 98,12 98,30 50,34 2,44" fill="#c47a3c"/><rect x="28" y="34" width="50" height="34" fill="#14161a"/><rect x="32" y="37" width="42" height="24" fill="#3a2c2a"/><polygon points="32,46 50,40 74,44 74,52 32,54" fill="#b86a34"/><rect x="24" y="68" width="58" height="3" fill="#555"/></svg>
    <div class="abs" style="left:89px;top:73.500px;width:67.500px;height:31px;background:#f5f5f5"></div>
    <div class="abs" style="left:94.500px;top:77.500px;width:2.600px;height:2.600px;border:.5px solid #3b8ad0;border-radius:50%"></div>
    <div class="t" style="left:94.500px;top:84.0px;font-size:3.900px;color:#000;font-weight:bold">多屏拼接模式</div>
    <div class="t" style="left:94.500px;top:88.9px;font-size:2.550px;color:#222">将多个显示器拼接成</div>
    <div class="t" style="left:94.500px;top:92.0px;font-size:2.550px;color:#222">一个大的画面，让视</div>
    <div class="t" style="left:94.500px;top:95.1px;font-size:2.550px;color:#222">野更加宽广</div>
    <svg class="abs" style="left:119.600px;top:77.200px" width="33.800" height="24.200" viewBox="0 0 100 72"><polygon points="2,6 98,2 98,70 2,66" fill="#2a2a2e"/><polygon points="5,9 95,5 95,40 5,42" fill="#e9c7d0"/><polygon points="5,42 95,40 95,66 5,63" fill="#c98a3a"/><polygon points="5,50 40,44 95,52 95,66 5,63" fill="#8a5a2a"/><ellipse cx="62" cy="22" rx="14" ry="15" fill="#e0682a"/><ellipse cx="82" cy="24" rx="8" ry="10" fill="#4a78c8"/><path d="M35,7V65M66,6V66M5,26L95,23M5,46L95,45" stroke="#2a2a2e" stroke-width="1"/></svg>
    <!-- right menu -->
    <div class="abs" style="left:164.300px;top:8.600px;width:10.200px;height:3.800px;background:#d9262c"></div>
    <div class="abs" style="left:166px;top:9.900px;width:6px;height:.6px;background:#fff"></div>
    <div class="bx" style="left:164.300px;top:13.500px;width:9.800px;height:3.600px;--f:#fff;--b:#e3b0b0"></div>
    <div class="bx" style="left:164.300px;top:18.800px;width:9.800px;height:3.600px;--f:#fff;--b:#e3b0b0"></div>
    <div class="bx" style="left:164.300px;top:24.100px;width:9.800px;height:3.600px;--f:#fff;--b:#e3b0b0"></div>
    <div class="bx" style="left:164.300px;top:29.400px;width:9.800px;height:3.600px;--f:#fff;--b:#e3b0b0"></div>
    <div class="abs" style="left:166px;top:15px;width:5px;height:.6px;background:#b55"></div>
    <div class="abs" style="left:166px;top:20.300px;width:5px;height:.6px;background:#b55"></div>
    <div class="abs" style="left:166px;top:25.600px;width:5px;height:.6px;background:#b55"></div>
    <div class="abs" style="left:166px;top:30.900px;width:5px;height:.6px;background:#b55"></div>
    <div class="abs" style="left:163.600px;top:37px;width:11.300px;height:4.800px;background:#d9262c"></div>
    <div class="abs" style="left:166px;top:39.100px;width:6.500px;height:.7px;background:#fff"></div>
    <!-- QR -->
    <div class="abs" style="left:180px;top:78.400px;width:15px;height:20.200px;background:#de2a2e"></div>
    <div class="abs" style="left:182.300px;top:83px;width:10px;height:10px;background:#f6eaea"></div>
    <div class="abs" style="left:183.300px;top:84px;width:8px;height:8px;background:repeating-conic-gradient(#333 0 25%,#f6eaea 0 50%) 0 0/2px 2px"></div>
    <div class="abs" style="left:182.500px;top:80.300px;width:9.500px;height:.8px;background:#f8d0d0"></div>
    <div class="abs" style="left:183.500px;top:95px;width:7.500px;height:.8px;background:#f8d0d0"></div>
    <!-- scrollbar -->
    <div class="abs" style="left:195.200px;top:6.700px;width:4.800px;height:98px;background:#f1f2f4"></div>
    <div class="abs" style="left:196px;top:46.500px;width:2.600px;height:16px;background:#8d9094;border-radius:1px"></div>
    <!-- status -->
    <div class="abs" style="left:0;top:104.800px;width:200px;height:3.200px;background:#f1f2f4;border-top:.3px solid #d8d8d8"></div>
    <div class="abs" style="left:130px;top:106px;width:60px;height:.7px;background:repeating-linear-gradient(90deg,#999 0 2px,#f1f2f4 2px 5px)"></div>
  </div>

  <!-- Photo viewer -->
  <svg class="abs" style="left:436.800px;top:144px" width="8.400" height="6.800" viewBox="0 0 18 15"><rect width="18" height="15" fill="#cfe6f5"/><rect x="1.500" y="1.500" width="15" height="12" fill="#5aa5d8"/><path d="M1.500 13.500l5-6 4 4 2.500-2 3.500 4z" fill="#1f4a70"/><rect x="1.500" y="1.500" width="15" height="4" fill="#a6d4ef"/></svg>
  <div class="wt" style="left:447.800px;top:145.200px;letter-spacing:.14px">QQ截图20230424114414.jpg - Windows 照片查看器</div>
  <div class="thumb" style="left:436.600px;top:154.600px;width:201.800px;height:108.300px;background:#eef2f9">
    <div class="abs" style="left:0;top:0;width:100%;height:2.600px;background:#fbfcfe"></div>
    <div class="abs" style="left:0;top:2.600px;width:100%;height:2.600px;background:#e3ebf6;border-bottom:.3px solid #c8d3e3"></div>
    <div class="abs" style="left:2px;top:3.500px;width:34px;height:.7px;background:repeating-linear-gradient(90deg,#9aa3b3 0 5px,#e3ebf6 5px 8px)"></div>
    <div class="abs" style="left:196.500px;top:3.200px;width:1.600px;height:1.600px;border-radius:50%;background:#3a78c8"></div>
    <div class="abs" style="left:191px;top:1px;width:9px;height:.6px;background:repeating-linear-gradient(90deg,#777 0 1.500px,#fbfcfe 1.500px 3.500px)"></div>
    <svg class="abs" style="left:62.200px;top:18.200px" width="76.800" height="71.300" viewBox="0 0 254 236">
      <defs><linearGradient id="pw" x1="0" y1="0" x2="1" y2="1"><stop offset="0" stop-color="#4f93d4"/><stop offset=".5" stop-color="#3f7fc4"/><stop offset="1" stop-color="#2e6cb0"/></linearGradient>
      <linearGradient id="mj" x1="0" y1="0" x2="0" y2="1"><stop offset="0" stop-color="#2c3e62"/><stop offset=".5" stop-color="#8391ae"/><stop offset="1" stop-color="#dab48e"/></linearGradient></defs>
      <rect width="254" height="236" fill="url(#pw)"/>
      <polygon points="0,0 254,0 254,24 0,8" fill="#5a9ad8"/>
      <polygon points="0,190 120,170 254,150 254,236 0,236" fill="#e4e9ef"/>
      <polygon points="0,200 90,184 150,196 0,230" fill="#d5dbe3"/>
      <!-- left monitor -->
      <polygon points="0,62 128,50 128,176 0,192" fill="#1d6fd6"/>
      <polygon points="0,62 128,50 128,56 0,68" fill="#2f86ea"/>
      <polygon points="0,90 66,84 68,150 0,158" fill="#e6e9ee"/>
      <polygon points="4,98 60,93 61,126 4,132" fill="#c9cfd8"/>
      <polygon points="128,50 134,52 134,174 128,176" fill="#10294a"/>
      <path d="M66,184L40,200M66,184L110,192" stroke="#b8c0ca" stroke-width="4"/>
      <!-- imac -->
      <polygon points="144,34 254,22 254,150 150,146" fill="#16181d"/>
      <polygon points="150,40 254,29 254,128 155,128" fill="url(#mj)"/>
      <polygon points="155,128 180,96 205,72 225,84 254,74 254,128" fill="#c79a6c"/>
      <polygon points="180,96 205,72 215,100 200,128 165,128" fill="#9a6e4e"/>
      <polygon points="150,128 254,128 254,152 150,148" fill="#e6e9ed"/>
      <polygon points="186,148 226,150 232,168 182,166" fill="#c5cad1"/>
      <!-- hub + cables -->
      <path d="M134,100L142,150L138,182" stroke="#222" stroke-width="2" fill="none"/>
      <polygon points="132,178 156,174 160,186 136,190" fill="#3a3d42"/>
      <ellipse cx="174" cy="196" rx="14" ry="7" fill="#1c1e22"/>
      <polygon points="14,222 126,198 150,208 36,236" fill="#1a1d22"/>
      <polygon points="210,184 254,176 254,196 222,200" fill="#f4f6f8"/>
    </svg>
    <div class="abs" style="left:0;top:102.200px;width:100%;height:6.100px;background:#e8eef7;border-top:.3px solid #cfd8e6"></div>
    <div class="abs" style="left:80px;top:104.600px;width:42px;height:1.300px;background:repeating-linear-gradient(90deg,#6d86a8 0 1.600px,#e8eef7 1.600px 4.200px)"></div>
    <div class="abs" style="left:99px;top:103.300px;width:3.800px;height:3.800px;border-radius:50%;background:#2f6fc0"></div>
  </div>

  <!-- Notepad 04-23 -->
  <svg class="abs" style="left:643.8px;top:143.4px" width="7.200" height="7.600" viewBox="0 0 18 19"><polygon points="4,1.500 16.500,2.500 14,18 1,16" fill="#a9d6ea"/><polygon points="5.500,4 14.800,4.800 13,15.800 3,14.400" fill="#eef8fc"/><path d="M6 7l7 .7M5.600 9.500l7 .7M5.200 12l6 .6" stroke="#6fa7c2" stroke-width=".9"/><polygon points="4,1.500 16.500,2.500 16.200,4.500 3.700,3.500" fill="#6aa9c8"/></svg>
  <div class="wt" style="left:653.800px;top:145.200px;letter-spacing:.17px">04-23-----1台主机2台显示器 t...</div>
  <div class="thumb" style="left:643.700px;top:154px;width:90.700px;height:108px;background:#fff">
    <div class="abs" style="left:1.200px;top:3.500px;width:22px;height:.6px;background:repeating-linear-gradient(90deg,#bbb 0 3.400px,#fff 3.400px 5px)"></div>
    <div class="abs" style="left:0;top:5px;width:100%;height:.25px;background:#ddd"></div>
    <div style="position:absolute;left:0;top:2px;width:90.800px;height:101px;overflow:hidden"><div class="t" style="left:2.0px;top:5.63px;font-size:1.93px;color:#000">标题：1台主机如何连接2台显示器？教你快速搞定双屏，简单实用！</div><div class="t" style="left:2.0px;top:8.34px;font-size:1.93px;color:#000">导语：办公或者游戏的时候，想要一台主机接两个显示器？</div><div class="t" style="left:2.0px;top:13.34px;font-size:1.93px;color:#000">嗨，大家好，我是小优。</div><div class="t" style="left:2.0px;top:18.43px;font-size:1.93px;color:#000">在我们日常办公、游戏娱乐的时候，很多人都会给电脑配上两台显示器，一边查资料一边写文档，或</div><div class="t" style="left:2.0px;top:21.04px;font-size:1.93px;color:#000">者一边打游戏一边看攻略，效率直接翻倍。那么1台主机怎么连接2台呢？</div><div class="t" style="left:2.0px;top:25.84px;font-size:1.93px;color:#000">首先，我们要确认电脑主机和显示器分别有哪些视频接口，是否支持双屏输出。</div><div class="t" style="left:2.0px;top:30.93px;font-size:1.93px;color:#000">第一步：确认主机显卡的接口类型HDMI、DP、DVI、VGA以及两台显示器的接口；</div><div class="t" style="left:2.0px;top:33.53px;font-size:1.93px;color:#000">第二步：根据接口类型准备对应的视频线，例如HDMI线、DP线，接口不一致时准备转换器或者转接</div><div class="t" style="left:2.0px;top:36.03px;font-size:1.93px;color:#000">第三步：分别把两台显示器通过视频线连接到主机显卡的接口上，注意不要接到主板的集成显卡接口</div><div class="t" style="left:2.0px;top:38.63px;font-size:1.93px;color:#000">第四步：开机后在桌面空白处点击鼠标右键，选择“显示设置”，就能看到两个显示器了。</div><div class="t" style="left:2.0px;top:43.63px;font-size:1.93px;color:#000">接下来就是选择显示模式了，按下键盘上的Win+P组合键，可以调出投影菜单，选择其中一种：</div><div class="t" style="left:2.0px;top:48.63px;font-size:1.93px;color:#000">第一种：复制模式，两台显示器显示相同的画面，适合开会演示、教学培训等让更多人分享的场景；</div><div class="t" style="left:2.0px;top:51.13px;font-size:1.93px;color:#000">第二种：扩展模式，两台显示器显示不同的画面，鼠标可以在两个屏幕之间自由移动；</div><div class="t" style="left:2.0px;top:55.03px;font-size:1.93px;color:#000">如果想要更大的视野，还可以通过显卡设置进行多屏拼接。</div><div class="t" style="left:2.0px;top:62.43px;font-size:1.93px;color:#000">有些朋友的笔记本电脑或者主机只有一个视频接口，这个时候应该怎么办呢？可以借助扩展坞或者分</div><div class="t" style="left:2.0px;top:67.33px;font-size:1.93px;color:#000">例如优越者的Type-C扩展坞，自带两个HDMI接口，支持4K高清输出，一根线就能轻松扩展出两台显</div><div class="t" style="left:2.0px;top:69.83px;font-size:1.93px;color:#000">时还带有USB3.0、网口、读卡器等常用接口，办公娱乐都非常方便，即插即用不需要安装任何驱动</div><div class="t" style="left:2.0px;top:74.63px;font-size:1.93px;color:#000">另外，视频线材的选择也很重要，如果显示器是4K分辨率或者144Hz高刷新率，建议选择HDMI2.0或</div><div class="t" style="left:2.0px;top:77.03px;font-size:1.93px;color:#000">本的线材，带宽更高，画面更稳定不闪屏。优越者HDMI线2.0版支持4K60Hz，镀金接头，多重屏蔽</div><div class="t" style="left:2.0px;top:79.53px;font-size:1.93px;color:#000">定可靠耐用。</div><div class="t" style="left:2.0px;top:84.33px;font-size:1.93px;color:#000">最后总结一下：1台主机连接2台显示器并不复杂，确认接口、准备线材、连接设备、设置显示模式</div><div class="t" style="left:2.0px;top:86.83px;font-size:1.93px;color:#000">定。你学会了吗？欢迎留言</div><div class="t" style="left:2.0px;top:91.63px;font-size:1.93px;color:#000">好了，以上就是今天分享的全部内容，如果对你有帮助，记得点赞关注哦，我们下期再见！如果还有</div><div class="t" style="left:2.0px;top:94.13px;font-size:1.93px;color:#000">在评论区留言告诉小优。</div></div>
    <div class="abs" style="left:0;top:103.200px;width:100%;height:4.200px;background:#f6f6f6"></div>
    <div class="abs" style="left:42px;top:104.900px;width:46px;height:.7px;background:repeating-linear-gradient(90deg,#aaa 0 6px,#f6f6f6 6px 9px)"></div>
  </div>

  <!-- Notepad *04.23-04.28 -->
  <svg class="abs" style="left:282px;top:270.8px" width="7.200" height="7.600" viewBox="0 0 18 19"><polygon points="4,1.500 16.500,2.500 14,18 1,16" fill="#a9d6ea"/><polygon points="5.500,4 14.800,4.800 13,15.800 3,14.400" fill="#eef8fc"/><path d="M6 7l7 .7M5.600 9.500l7 .7M5.200 12l6 .6" stroke="#6fa7c2" stroke-width=".9"/><polygon points="4,1.500 16.500,2.500 16.200,4.500 3.700,3.500" fill="#6aa9c8"/></svg>
  <div class="wt" style="left:292.700px;top:272.400px;letter-spacing:.07px">*04.23-04.28.txt - 记事本</div>
  <div class="thumb" style="left:281.500px;top:280.700px;width:106.500px;height:110px;background:#fff">
    <div class="abs" style="left:1.200px;top:3.300px;width:26px;height:.6px;background:repeating-linear-gradient(90deg,#bbb 0 3.800px,#fff 3.800px 5.600px)"></div>
    <div class="abs" style="left:0;top:5px;width:100%;height:.25px;background:#ddd"></div>
    <div style="position:absolute;left:0;top:0;width:106.500px;height:104px;overflow:hidden"><div class="t" style="left:1.700px;top:8.07px;font-size:2.05px;color:#000">04月23日（星期日）工作</div><div class="t" style="left:1.700px;top:10.47px;font-size:2.05px;color:#000">1、图文：科普+行业资讯各1</div><div class="t" style="left:1.700px;top:12.88px;font-size:2.05px;color:#000">2、视频号脚本：扩展坞怎么选</div><div class="t" style="left:1.700px;top:15.37px;font-size:2.05px;color:#000">3、小红书笔记两篇，配图共</div><div class="t" style="left:1.700px;top:17.78px;font-size:2.05px;color:#000">4、整理上周公众号后台数据并</div><div class="t" style="left:1.700px;top:20.28px;font-size:2.05px;color:#000">5、回复后台粉丝留言及评论</div><div class="t" style="left:1.700px;top:25.08px;font-size:2.05px;color:#000">04月24日（星期一）工作</div><div class="t" style="left:1.700px;top:27.48px;font-size:2.05px;color:#000">1、周一例会，选题</div><div class="t" style="left:1.700px;top:29.88px;font-size:2.05px;color:#000">2、公众号推文：1台主机2台</div><div class="t" style="left:1.700px;top:32.27px;font-size:2.05px;color:#000">3、JC3002 HDMI线详情页文</div><div class="t" style="left:1.700px;top:34.77px;font-size:2.05px;color:#000">4、双屏显示器使用场景图拍摄</div><div class="t" style="left:1.700px;top:37.18px;font-size:2.05px;color:#000">5、月度选题表提交给主管审</div><div class="t" style="left:1.700px;top:42.68px;font-size:2.05px;color:#000">04月25日：硬盘盒评测视频脚本+素材</div><div class="t" style="left:1.700px;top:56.58px;font-size:2.05px;color:#000">周三：新品移动硬盘盒上新推文，联系设计师做头图</div><div class="t" style="left:1.700px;top:63.57px;font-size:2.05px;color:#000">周四至周五：无线投屏器与有线投屏对比测评，图文+视频同步发布，抖音、小红书、B</div><div class="t" style="left:1.700px;top:68.67px;font-size:2.05px;color:#000">周五下午：本周工作总结及下周</div><div class="t" style="left:1.700px;top:78.27px;font-size:2.05px;color:#000">待确认：样品寄</div></div>
    <div class="abs" style="left:0;top:105.800px;width:100%;height:4.200px;background:#f6f6f6"></div>
    <div class="abs" style="left:62px;top:107.500px;width:42px;height:.7px;background:repeating-linear-gradient(90deg,#aaa 0 6px,#f6f6f6 6px 9px)"></div>
  </div>

  <!-- WeChat image viewer -->
  <svg class="abs" style="left:394px;top:271.400px" width="8.800" height="6.800" viewBox="0 0 21 17"><ellipse cx="7.800" cy="6.800" rx="7.800" ry="6.600" fill="#2dc24d"/><ellipse cx="14.800" cy="11" rx="6.200" ry="5.300" fill="#f4f4f4"/><circle cx="5.200" cy="5" r="1" fill="#0c6e24"/><circle cx="10.200" cy="5" r="1" fill="#0c6e24"/></svg>
  <div class="wt" style="left:405.300px;top:272.500px;font-size:4.450px">图片查看</div>
  <div class="thumb" style="left:393.500px;top:280.700px;width:83.100px;height:110.100px;background:#fff">
    <div class="abs" style="left:2px;top:2.200px;width:18px;height:.8px;background:repeating-linear-gradient(90deg,#999 0 1.800px,#fff 1.800px 4.200px)"></div>
    <div class="abs" style="left:70px;top:2.200px;width:11px;height:.8px;background:repeating-linear-gradient(90deg,#999 0 1.800px,#fff 1.800px 4.200px)"></div>
    <div class="abs" style="left:1.200px;top:11.600px;width:33.600px;height:92.500px;background:#e7e7e7"></div>
    <div style="position:absolute;left:1.200px;top:11.600px;width:33.600px;height:92.500px;overflow:hidden"><div class="abs" style="left:2.400px;top:8px;width:1.500px;height:1.500px;background:#555"></div><div class="abs" style="left:6.200px;top:8.4px;width:7px;height:.75px;background:#444"></div><div class="abs" style="left:2.400px;top:12.7px;width:1.500px;height:1.500px;background:#555"></div><div class="abs" style="left:6.200px;top:13.1px;width:5px;height:.75px;background:#444"></div><div class="bx" style="left:1.600px;top:17.299999999999997px;width:29px;height:2.600px;--f:#fff;--b:#999"></div><div class="abs" style="left:1.600px;top:23.1px;width:3px;height:.8px;background:#222"></div><div class="abs" style="left:2.400px;top:27.3px;width:1.500px;height:1.500px;background:#555"></div><div class="abs" style="left:6.200px;top:27.7px;width:8px;height:.75px;background:#444"></div><div class="abs" style="left:2.400px;top:31.9px;width:1.500px;height:1.500px;background:#555"></div><div class="abs" style="left:6.200px;top:32.3px;width:5px;height:.75px;background:#444"></div><div class="abs" style="left:2.400px;top:36.6px;width:1.500px;height:1.500px;background:#555"></div><div class="abs" style="left:6.200px;top:37.0px;width:8px;height:.75px;background:#444"></div><div class="abs" style="left:2.400px;top:41.3px;width:1.500px;height:1.500px;background:#555"></div><div class="abs" style="left:6.200px;top:41.699999999999996px;width:8px;height:.75px;background:#444"></div><div class="abs" style="left:2.400px;top:46px;width:1.500px;height:1.500px;background:#555"></div><div class="abs" style="left:6.200px;top:46.4px;width:8px;height:.75px;background:#444"></div><div class="abs" style="left:2.400px;top:50.6px;width:1.500px;height:1.500px;background:#555"></div><div class="abs" style="left:6.200px;top:51.0px;width:7px;height:.75px;background:#444"></div><div class="abs" style="left:2.400px;top:55.3px;width:1.500px;height:1.500px;background:#555"></div><div class="abs" style="left:6.200px;top:55.699999999999996px;width:3px;height:.75px;background:#444"></div><div class="abs" style="left:2.400px;top:60px;width:1.500px;height:1.500px;background:#555"></div><div class="abs" style="left:6.200px;top:60.4px;width:6px;height:.75px;background:#444"></div><div class="abs" style="left:2.400px;top:64.6px;width:1.500px;height:1.500px;background:#555"></div><div class="abs" style="left:6.200px;top:65.0px;width:4px;height:.75px;background:#444"></div><div class="abs" style="left:2.400px;top:69.3px;width:1.500px;height:1.500px;background:#555"></div><div class="abs" style="left:6.200px;top:69.7px;width:8px;height:.75px;background:#444"></div><div class="abs" style="left:2.400px;top:74px;width:1.500px;height:1.500px;background:#555"></div><div class="abs" style="left:6.200px;top:74.4px;width:3px;height:.75px;background:#444"></div><div class="abs" style="left:2.400px;top:78.7px;width:1.500px;height:1.500px;background:#555"></div><div class="abs" style="left:6.200px;top:79.10000000000001px;width:4px;height:.75px;background:#444"></div><div class="abs" style="left:2.400px;top:83.3px;width:1.500px;height:1.500px;background:#555"></div><div class="abs" style="left:6.200px;top:83.7px;width:3px;height:.75px;background:#444"></div><div class="abs" style="left:2.400px;top:88px;width:1.500px;height:1.500px;background:#555"></div><div class="abs" style="left:6.200px;top:88.4px;width:5px;height:.75px;background:#444"></div></div>
    <div class="abs" style="left:2.800px;top:14.400px;width:2px;height:.5px;background:#333"></div>
    <div class="abs" style="left:6px;top:14.300px;width:4px;height:.7px;background:#555"></div>
    <div class="t" style="left:38.600px;top:17.200px;font-size:3.500px;color:#111">屏幕</div>
    <div class="t" style="left:38.600px;top:22.200px;font-size:1.800px;color:#2a7ad0">Windows HD Color 设置</div>
    <div class="t" style="left:38.600px;top:28.800px;font-size:2.400px;color:#111;font-weight:bold">缩放与布局</div>
    <div class="t" style="left:38.600px;top:33.700px;font-size:1.700px;color:#333">更改文本、应用等项目的大小</div>
    <div class="bx" style="left:38.600px;top:36.500px;width:29.500px;height:3.600px;--f:#fff;--b:#888"></div>
    <div class="abs" style="left:40px;top:37.900px;width:10px;height:.7px;background:#444"></div>
    <div class="t" style="left:38.600px;top:41.400px;font-size:1.700px;color:#2a7ad0">高级缩放设置</div>
    <div class="t" style="left:38.600px;top:45.800px;font-size:1.700px;color:#333">显示分辨率</div>
    <div class="bx" style="left:38.600px;top:48.500px;width:29.500px;height:3.600px;--f:#fff;--b:#888"></div>
    <div class="abs" style="left:40px;top:49.900px;width:14px;height:.7px;background:#444"></div>
    <div class="t" style="left:38.600px;top:53.800px;font-size:1.700px;color:#333">显示方向</div>
    <div class="bx" style="left:38.600px;top:56.400px;width:29.500px;height:3.600px;--f:#fff;--b:#888"></div>
    <div class="abs" style="left:40px;top:57.800px;width:5px;height:.7px;background:#444"></div>
    <div class="t" style="left:38.600px;top:64.300px;font-size:2.400px;color:#111;font-weight:bold">多显示器</div>
    <div class="t" style="left:38.600px;top:69.300px;font-size:1.700px;color:#333">多显示器</div>
    <div class="bx" style="left:38.600px;top:71.600px;width:29.500px;height:15.200px;--f:#f2f2f2;--b:#777"></div>
    <div class="bx" style="left:38.900px;top:72px;width:28.900px;height:3.400px;--f:#cfe3f7;--b:#3b86d8"></div>
    <div class="abs" style="left:40px;top:73.300px;width:12px;height:.7px;background:#222"></div>
    <div class="abs" style="left:40px;top:77px;width:12px;height:.7px;background:#444"></div>
    <div class="abs" style="left:40px;top:80.600px;width:9px;height:.7px;background:#444"></div>
    <div class="abs" style="left:40px;top:84.200px;width:9px;height:.7px;background:#444"></div>
    <div class="t" style="left:38.600px;top:92px;font-size:2.400px;color:#111;font-weight:bold">更早版本</div>
    <div class="abs" style="left:38.600px;top:96.800px;width:38px;height:.7px;background:#777"></div>
    <div class="abs" style="left:38.600px;top:99px;width:20px;height:.7px;background:#777"></div>
  </div>

  <!-- Explorer -->
  <svg class="abs" style="left:484px;top:271.500px" width="4.800" height="7.200" viewBox="0 0 10 15"><path d="M0 0h6.500L10 3.500V15H0z" fill="#f6d24a"/><path d="M0 0h3v15H0z" fill="#e0a820"/><path d="M6.500 0L10 3.500H6.500z" fill="#fbe9a0"/></svg>
  <div class="wt" style="left:493.200px;top:272.600px">3-【图文】科普+行业资讯</div>
  <div class="thumb" style="left:481.600px;top:281.800px;width:200.400px;height:108px;background:#fff">
    <div class="abs" style="left:1px;top:.9px;width:9px;height:.8px;background:repeating-linear-gradient(90deg,#e2b52f 0 1.300px,#fff 1.300px 2.200px)"></div>
    <div class="abs" style="left:190px;top:1px;width:9px;height:.6px;background:repeating-linear-gradient(90deg,#777 0 1.500px,#fff 1.500px 3.500px)"></div>
    <div class="abs" style="left:0;top:2.500px;width:6.200px;height:3px;background:#1a6fd0"></div>
    <div class="abs" style="left:8.500px;top:3.700px;width:14px;height:.7px;background:repeating-linear-gradient(90deg,#555 0 2.600px,#fff 2.600px 5.700px)"></div>
    <div class="abs" style="left:0;top:5.500px;width:100%;height:12.800px;background:#f5f6f7;border-bottom:.3px solid #dadbdc"></div>
    <div class="abs" style="left:2px;top:7px;width:2.400px;height:3px;background:#7aa7d8"></div>
    <div class="abs" style="left:7px;top:7px;width:2.400px;height:3px;background:#c0c8d4"></div>
    <div class="abs" style="left:11.500px;top:7px;width:2.400px;height:3.400px;background:#d8dce2"></div>
    <div class="abs" style="left:16px;top:6.800px;width:6px;height:.7px;background:#666"></div>
    <div class="abs" style="left:16px;top:8.600px;width:5px;height:.7px;background:#666"></div>
    <div class="abs" style="left:16px;top:10.400px;width:5px;height:.7px;background:#666"></div>
    <div class="abs" style="left:27.500px;top:7px;width:2.400px;height:2.800px;background:#f0c23a"></div>
    <div class="abs" style="left:31.800px;top:7px;width:2.400px;height:2.800px;background:#f0c23a"></div>
    <div class="abs" style="left:36.600px;top:7px;width:2.200px;height:2.600px;background:#d9342c"></div>
    <div class="abs" style="left:40.800px;top:7px;width:2.400px;height:2.800px;background:#b7c7dc"></div>
    <div class="abs" style="left:47.500px;top:6.800px;width:2.800px;height:3.200px;background:#f0c23a"></div>
    <div class="abs" style="left:53px;top:6.800px;width:6px;height:.7px;background:#666"></div>
    <div class="abs" style="left:53px;top:8.600px;width:6px;height:.7px;background:#666"></div>
    <div class="abs" style="left:63px;top:6.800px;width:2.400px;height:3px;background:#e8d9a0"></div>
    <div class="abs" style="left:67.500px;top:6.800px;width:5px;height:.7px;background:#666"></div>
    <div class="abs" style="left:67.500px;top:8.600px;width:5px;height:.7px;background:#666"></div>
    <div class="abs" style="left:67.500px;top:10.400px;width:5px;height:.7px;background:#666"></div>
    <div class="abs" style="left:77.500px;top:6.800px;width:7px;height:.7px;background:#3b7fc8"></div>
    <div class="abs" style="left:77.500px;top:8.600px;width:7px;height:.7px;background:#3b7fc8"></div>
    <div class="abs" style="left:77.500px;top:10.400px;width:6px;height:.7px;background:#3b7fc8"></div>
    <div class="abs" style="left:2px;top:13.500px;width:84px;height:.6px;background:repeating-linear-gradient(90deg,#888 0 5px,#f5f6f7 5px 14px)"></div>
    <div class="abs" style="left:0;top:18.300px;width:100%;height:4.400px;background:#fff"></div>
    <div class="abs" style="left:2px;top:20.200px;width:7px;height:.7px;background:repeating-linear-gradient(90deg,#777 0 1.200px,#fff 1.200px 2.400px)"></div>
    <div class="bx" style="left:12px;top:19.300px;width:160px;height:2.600px;--f:#fff;--b:#d9d9d9"></div>
    <div class="abs" style="left:14px;top:20.300px;width:52px;height:.6px;background:repeating-linear-gradient(90deg,#666 0 5px,#fff 5px 8px)"></div>
    <div class="bx" style="left:176px;top:19.300px;width:23px;height:2.600px;--f:#fff;--b:#d9d9d9"></div>
    <div class="abs" style="left:188px;top:20.300px;width:9px;height:.6px;background:#aaa"></div>
    <div class="abs" style="left:22px;top:24.400px;width:6px;height:.6px;background:#777"></div>
    <div class="abs" style="left:46px;top:24.400px;width:6px;height:.6px;background:#777"></div>
    <div class="abs" style="left:61.500px;top:24.400px;width:4px;height:.6px;background:#777"></div>
    <div class="abs" style="left:78px;top:24.400px;width:4px;height:.6px;background:#777"></div>
    <div class="bx" style="left:18.800px;top:33.700px;width:66px;height:2.100px;--f:#dcdcdc;--b:#c8c8c8"></div>
    <div class="abs" style="left:3.5px;top:25.6px;width:1.400px;height:1.200px;background:#e9b928"></div><div class="abs" style="left:5.500px;top:25.900000000000002px;width:6px;height:.6px;background:#555"></div><div class="abs" style="left:2.5px;top:27.8px;width:1.400px;height:1.200px;background:#e9b928"></div><div class="abs" style="left:5.500px;top:28.1px;width:3px;height:.6px;background:#555"></div><div class="abs" style="left:2.5px;top:30px;width:1.400px;height:1.200px;background:#3b8ad8"></div><div class="abs" style="left:5.500px;top:30.3px;width:4px;height:.6px;background:#555"></div><div class="abs" style="left:2.5px;top:32.2px;width:1.400px;height:1.200px;background:#5aa0e0"></div><div class="abs" style="left:5.500px;top:32.5px;width:6px;height:.6px;background:#555"></div><div class="abs" style="left:3.5px;top:34.4px;width:1.400px;height:1.200px;background:#3b8ad8"></div><div class="abs" style="left:5.500px;top:34.699999999999996px;width:6px;height:.6px;background:#555"></div><div class="abs" style="left:3.5px;top:37.6px;width:1.400px;height:1.200px;background:#f2cf55"></div><div class="abs" style="left:5.500px;top:37.9px;width:6px;height:.6px;background:#555"></div><div class="abs" style="left:2.5px;top:39.8px;width:1.400px;height:1.200px;background:#5aa0e0"></div><div class="abs" style="left:5.500px;top:40.099999999999994px;width:6px;height:.6px;background:#555"></div><div class="abs" style="left:3.5px;top:42px;width:1.400px;height:1.200px;background:#3b8ad8"></div><div class="abs" style="left:5.500px;top:42.3px;width:4px;height:.6px;background:#555"></div><div class="abs" style="left:3.5px;top:44.2px;width:1.400px;height:1.200px;background:#3b8ad8"></div><div class="abs" style="left:5.500px;top:44.5px;width:5px;height:.6px;background:#555"></div><div class="abs" style="left:3.5px;top:46.4px;width:1.400px;height:1.200px;background:#5aa0e0"></div><div class="abs" style="left:5.500px;top:46.699999999999996px;width:6px;height:.6px;background:#555"></div><div class="abs" style="left:3.5px;top:48.6px;width:1.400px;height:1.200px;background:#f2cf55"></div><div class="abs" style="left:5.500px;top:48.9px;width:3px;height:.6px;background:#555"></div><div class="abs" style="left:2.5px;top:50.8px;width:1.400px;height:1.200px;background:#3b8ad8"></div><div class="abs" style="left:5.500px;top:51.099999999999994px;width:3px;height:.6px;background:#555"></div><div class="abs" style="left:3.5px;top:53px;width:1.400px;height:1.200px;background:#f2cf55"></div><div class="abs" style="left:5.500px;top:53.3px;width:6px;height:.6px;background:#555"></div><div class="abs" style="left:3.5px;top:55.2px;width:1.400px;height:1.200px;background:#3b8ad8"></div><div class="abs" style="left:5.500px;top:55.5px;width:3px;height:.6px;background:#555"></div><div class="abs" style="left:2.5px;top:58.4px;width:1.400px;height:1.200px;background:#3b8ad8"></div><div class="abs" style="left:5.500px;top:58.699999999999996px;width:3px;height:.6px;background:#555"></div><div class="abs" style="left:3.5px;top:60.6px;width:1.400px;height:1.200px;background:#f2cf55"></div><div class="abs" style="left:5.500px;top:60.9px;width:4px;height:.6px;background:#555"></div><div class="abs" style="left:2.5px;top:62.8px;width:1.400px;height:1.200px;background:#5aa0e0"></div><div class="abs" style="left:5.500px;top:63.099999999999994px;width:3px;height:.6px;background:#555"></div><div class="abs" style="left:2.5px;top:65px;width:1.400px;height:1.200px;background:#5aa0e0"></div><div class="abs" style="left:5.500px;top:65.3px;width:6px;height:.6px;background:#555"></div><div class="abs" style="left:2.5px;top:67.2px;width:1.400px;height:1.200px;background:#e9b928"></div><div class="abs" style="left:5.500px;top:67.5px;width:6px;height:.6px;background:#555"></div><div class="abs" style="left:3.5px;top:69.4px;width:1.400px;height:1.200px;background:#5aa0e0"></div><div class="abs" style="left:5.500px;top:69.7px;width:5px;height:.6px;background:#555"></div><div class="abs" style="left:3.5px;top:71.6px;width:1.400px;height:1.200px;background:#5aa0e0"></div><div class="abs" style="left:5.500px;top:71.89999999999999px;width:6px;height:.6px;background:#555"></div><div class="abs" style="left:2.5px;top:73.8px;width:1.400px;height:1.200px;background:#e9b928"></div><div class="abs" style="left:5.500px;top:74.1px;width:3px;height:.6px;background:#555"></div><div class="abs" style="left:3.5px;top:76px;width:1.400px;height:1.200px;background:#5aa0e0"></div><div class="abs" style="left:5.500px;top:76.3px;width:5px;height:.6px;background:#555"></div><div class="abs" style="left:3.5px;top:79px;width:1.400px;height:1.200px;background:#3b8ad8"></div><div class="abs" style="left:5.500px;top:79.3px;width:6px;height:.6px;background:#555"></div><div class="abs" style="left:19.500px;top:27.5px;width:1.600px;height:1.300px;background:#f2cf55"></div><div class="abs" style="left:22px;top:27.85px;width:4px;height:.6px;background:#444"></div><div class="abs" style="left:46px;top:27.85px;width:11px;height:.6px;background:#999"></div><div class="abs" style="left:61.500px;top:27.85px;width:5px;height:.6px;background:#999"></div><div class="abs" style="left:19.500px;top:29.7px;width:1.600px;height:1.300px;background:#f2cf55"></div><div class="abs" style="left:22px;top:30.05px;width:3px;height:.6px;background:#444"></div><div class="abs" style="left:46px;top:30.05px;width:11px;height:.6px;background:#999"></div><div class="abs" style="left:61.500px;top:30.05px;width:5px;height:.6px;background:#999"></div><div class="abs" style="left:19.500px;top:31.9px;width:1.600px;height:1.300px;background:#f2cf55"></div><div class="abs" style="left:22px;top:32.25px;width:4px;height:.6px;background:#444"></div><div class="abs" style="left:46px;top:32.25px;width:11px;height:.6px;background:#999"></div><div class="abs" style="left:61.500px;top:32.25px;width:5px;height:.6px;background:#999"></div><div class="abs" style="left:19.500px;top:34.1px;width:1.600px;height:1.300px;background:#e8e8e8"></div><div class="abs" style="left:22px;top:34.45px;width:20px;height:.6px;background:#444"></div><div class="abs" style="left:46px;top:34.45px;width:11px;height:.6px;background:#999"></div><div class="abs" style="left:61.500px;top:34.45px;width:5px;height:.6px;background:#999"></div><div class="abs" style="left:78px;top:34.45px;width:3px;height:.6px;background:#999"></div><div class="abs" style="left:19.500px;top:36.3px;width:1.600px;height:1.300px;background:#e8e8e8"></div><div class="abs" style="left:22px;top:36.65px;width:22px;height:.6px;background:#444"></div><div class="abs" style="left:46px;top:36.65px;width:11px;height:.6px;background:#999"></div><div class="abs" style="left:61.500px;top:36.65px;width:5px;height:.6px;background:#999"></div><div class="abs" style="left:78px;top:36.65px;width:3px;height:.6px;background:#999"></div><div class="abs" style="left:19.500px;top:38.5px;width:1.600px;height:1.300px;background:#e8e8e8"></div><div class="abs" style="left:22px;top:38.85px;width:19px;height:.6px;background:#444"></div><div class="abs" style="left:46px;top:38.85px;width:11px;height:.6px;background:#999"></div><div class="abs" style="left:61.500px;top:38.85px;width:5px;height:.6px;background:#999"></div><div class="abs" style="left:78px;top:38.85px;width:3px;height:.6px;background:#999"></div>
    <div class="abs" style="left:1.500px;top:79px;width:15px;height:1.900px;background:#dcdcdc"></div>
    <div class="abs" style="left:2px;top:105.200px;width:12px;height:.6px;background:#777"></div>
    <div class="abs" style="left:195px;top:104.700px;width:3.600px;height:1.600px;background:repeating-linear-gradient(90deg,#6a9bd8 0 1.400px,#fff 1.400px 2.200px)"></div>
  </div>

  <!-- netspeed widget -->
  <div class="abs" style="left:714px;top:337px;width:29.300px;height:16.500px;border-radius:8.200px;background:#242935"></div>
  <svg class="abs" style="left:696.700px;top:333.800px" width="23" height="23" viewBox="0 0 46 46"><circle cx="23" cy="23" r="21.500" fill="#2a303c"/><circle cx="23" cy="23" r="20.600" fill="none" stroke="#59606c" stroke-width="1.800"/><path d="M23 2.400A20.600 20.600 0 0 1 17.800 42.900" fill="none" stroke="#bfe8c8" stroke-width="2"/></svg>
  <div class="t" style="left:701.700px;top:340.700px;font-size:9.200px;color:#fff;letter-spacing:-.3px;text-shadow:0 0 .5px #fff">54</div>
  <div class="t" style="left:712.300px;top:345.600px;font-size:3.200px;color:#d5d8de">%</div>
  <div class="t" style="left:721.600px;top:338.800px;font-size:3.200px;color:#9aa3b5">▲</div>
  <div class="t" style="left:721.600px;top:348.300px;font-size:3.200px;color:#9aa3b5">▼</div>
  <div class="t" style="left:727.600px;top:338.700px;font-size:4.300px;color:#f0f2f5;font-weight:bold">0.2<span style="font-size:2.800px;color:#8d95a5;font-weight:normal"> K/s</span></div>
  <div class="t" style="left:726.600px;top:347.900px;font-size:4.300px;color:#f0f2f5;font-weight:bold">128<span style="font-size:2.800px;color:#8d95a5;font-weight:normal"> K/s</span></div>
</div>

<!-- TASKBAR -->
<div id="taskbar">
  <!-- start -->
  <svg class="abs" style="left:6px;top:4.300px" width="7" height="6.800" viewBox="0 0 14 14"><path d="M0 2l6-.9V6.600H0zM6.800 1L14 0v6.600H6.800zM0 7.400h6v5.500L0 12zM6.800 7.400H14V14l-7.200-1z" fill="#fff"/></svg>
  <!-- search -->
  <svg class="abs" style="left:24.500px;top:3.700px" width="8.500" height="8" viewBox="0 0 17 16"><circle cx="10.500" cy="5.500" r="4.200" fill="none" stroke="#fff" stroke-width="1.700"/><path d="M7.500 8.800L1.500 14.500" stroke="#fff" stroke-width="1.900"/></svg>
  <!-- task view -->
  <svg class="abs" style="left:43px;top:4.500px" width="7.500" height="6" viewBox="0 0 15 12"><rect x="2.500" y="2" width="8" height="8" fill="none" stroke="#fff" stroke-width="1.500"/><path d="M0.700 0v3M0.700 9v3M12.700 3v6M14.300 0v12" stroke="#fff" stroke-width="1.200"/><path d="M11 5h3v2h-3z" fill="#fff"/></svg>
  <div class="abs" style="left:59.200px;top:3.500px;width:.6px;height:9px;background:#383838"></div>
  <!-- explorer -->
  <svg class="abs" style="left:70.200px;top:3.800px" width="8.800" height="7.200" viewBox="0 0 18 15"><path d="M0 1.500h6l1.500 1.500H18V15H0z" fill="#e9b928"/><rect x="0" y="4.500" width="18" height="10.500" fill="#f6d652"/><rect x="3" y="9" width="12" height="6" fill="#4f9be0"/><rect x="4.500" y="10.500" width="9" height="4.500" fill="#e8f2fb"/></svg>
  <!-- ps -->
  <div class="abs" style="left:89.700px;top:2.900px;width:8.700px;height:8.400px;background:#0b2033;border:.7px solid #2488c4;color:#36a0e0;font-size:4.800px;line-height:7px;text-align:center;font-weight:bold;letter-spacing:-.2px">Ps</div>
  <!-- 360 -->
  <svg class="abs" style="left:108.300px;top:2.600px" width="9.200" height="9.200" viewBox="0 0 20 20"><circle cx="10" cy="10" r="9.500" fill="#6fbf2c"/><circle cx="10" cy="10" r="6.800" fill="#b7e36a"/><circle cx="10" cy="10" r="4.600" fill="#7cc634"/><path d="M6 9.500a4 4 0 018 0M6.500 12c2 2.500 5 2.500 7 0" stroke="#fff" stroke-width="1.500" fill="none"/></svg>
  <!-- notepad -->
  <svg class="abs" style="left:127.500px;top:3.200px" width="9" height="8.600" viewBox="0 0 18 17"><polygon points="4,1 16,2 14,16 1,14" fill="#bfe3f2"/><polygon points="5.500,3 14.500,3.800 13,14 3,12.600" fill="#eef8fc"/><path d="M6 6l7 .7M5.600 8.500l7 .7M5.200 11l6 .6" stroke="#6fa7c2" stroke-width=".9"/><rect x="4" y="0.500" width="12" height="2" fill="#7fb6d1"/></svg>
  <!-- wechat -->
  <svg class="abs" style="left:145.800px;top:3.700px" width="10.400" height="7.800" viewBox="0 0 21 16"><ellipse cx="7.500" cy="6.500" rx="7.500" ry="6.300" fill="#2dc24d"/><ellipse cx="14.500" cy="10" rx="6.200" ry="5.200" fill="#f2f2f2"/><circle cx="5" cy="5" r="1" fill="#0c6e24"/><circle cx="10" cy="5" r="1" fill="#0c6e24"/></svg>
  <!-- photos -->
  <svg class="abs" style="left:166px;top:3.700px" width="8.800" height="7" viewBox="0 0 18 14"><rect width="18" height="14" fill="#bfe0f2"/><rect x="1.500" y="1.500" width="15" height="11" fill="#5aa5d8"/><path d="M1.500 12.500l5-6 4 4 2.500-2 3.500 4z" fill="#1f4a70"/><rect x="1.500" y="1.500" width="15" height="4" fill="#9ed0ee"/></svg>
  <!-- indicators -->
  <div class="abs" style="left:67px;top:14.700px;width:15.500px;height:.8px;background:#8aa3c4"></div>
  <div class="abs" style="left:86.300px;top:14.700px;width:15.500px;height:.8px;background:#8aa3c4"></div>
  <div class="abs" style="left:105.300px;top:14.700px;width:15.500px;height:.8px;background:#8aa3c4"></div>
  <div class="abs" style="left:124.500px;top:14.700px;width:15.500px;height:.8px;background:#8aa3c4"></div>
  <div class="abs" style="left:143.500px;top:14.700px;width:15.500px;height:.8px;background:#8aa3c4"></div>
  <div class="abs" style="left:162.500px;top:14.700px;width:15.500px;height:.8px;background:#8aa3c4"></div>
  <!-- tray -->
  <svg class="abs" style="left:614.500px;top:6.500px" width="5" height="3" viewBox="0 0 10 6"><path d="M1 5l4-4 4 4" fill="none" stroke="#fff" stroke-width="1.400"/></svg>
  <div class="abs" style="left:623.300px;top:4px;width:6.400px;height:7px;background:#e9f2fb;border-radius:.8px"></div>
  <div class="abs" style="left:624.800px;top:5.300px;width:3.400px;height:3.400px;border-radius:50%;border:.9px solid #2f86d8"></div>
  <div class="abs" style="left:632.800px;top:4.200px;width:6.600px;height:6.600px;background:#e02a3c;border-radius:1px;color:#fff;font-size:3.600px;line-height:6.600px;text-align:center;font-weight:bold">优</div>
  <svg class="abs" style="left:642.300px;top:4.400px" width="7" height="6.600" viewBox="0 0 14 13"><rect x="1" y="1" width="12" height="8" fill="none" stroke="#e8e8e8" stroke-width="1.500"/><path d="M5 12h4M7 9v3" stroke="#e8e8e8" stroke-width="1.500"/><rect x="3" y="3" width="5" height="4" fill="#e8e8e8"/></svg>
  <svg class="abs" style="left:651px;top:4.600px" width="7.600" height="6" viewBox="0 0 21 16"><ellipse cx="7.500" cy="6.500" rx="7.500" ry="6.300" fill="#2dc24d"/><ellipse cx="14.500" cy="10" rx="6.200" ry="5.200" fill="#3ed05c"/></svg>
  <svg class="abs" style="left:660.300px;top:4px" width="5.600" height="7.200" viewBox="0 0 11 14"><rect x="1" y="6" width="9" height="8" rx="1" fill="#d51bb0"/><path d="M3 6V4a2.500 2.500 0 015 0v2" fill="none" stroke="#f4d9ee" stroke-width="1.600"/><circle cx="5.500" cy="10" r="1.600" fill="#fff"/></svg>
  <svg class="abs" style="left:669.500px;top:4.800px" width="6.400" height="5.600" viewBox="0 0 13 11"><path d="M1 3.500h2.500L7 .8v9.400L3.500 7.500H1z" fill="none" stroke="#e8e8e8" stroke-width="1.100"/><path d="M9 3.500q1.500 2 0 4M10.800 2q2.600 3.500 0 7" fill="none" stroke="#e8e8e8" stroke-width="1"/></svg>
  <div class="t" style="left:680px;top:5px;font-size:4.800px;color:#e8e8e8">中</div>
  <svg class="abs" style="left:690px;top:3.800px" width="7.200" height="7.600" viewBox="0 0 14 15"><polygon points="3,1 13,2.500 11,14 1,12" fill="#3fbf4a"/><polygon points="5,4 11,5 10,11.500 3.800,10.500" fill="#d9f5d6"/></svg>
  <div class="t" style="left:703px;top:1.500px;width:24px;text-align:center;font-size:5px;color:#fff">11:48</div>
  <div class="t" style="left:703px;top:9.300px;width:24px;text-align:center;font-size:5.200px;color:#fff">2023/4/24</div>
  <svg class="abs" style="left:733.500px;top:3.800px" width="7" height="7.400" viewBox="0 0 14 15"><path d="M1 1h12v9.500H8.500L6 13.500V10.500H1z" fill="none" stroke="#fff" stroke-width="1.300"/></svg>
</div>
</body>
</html>
